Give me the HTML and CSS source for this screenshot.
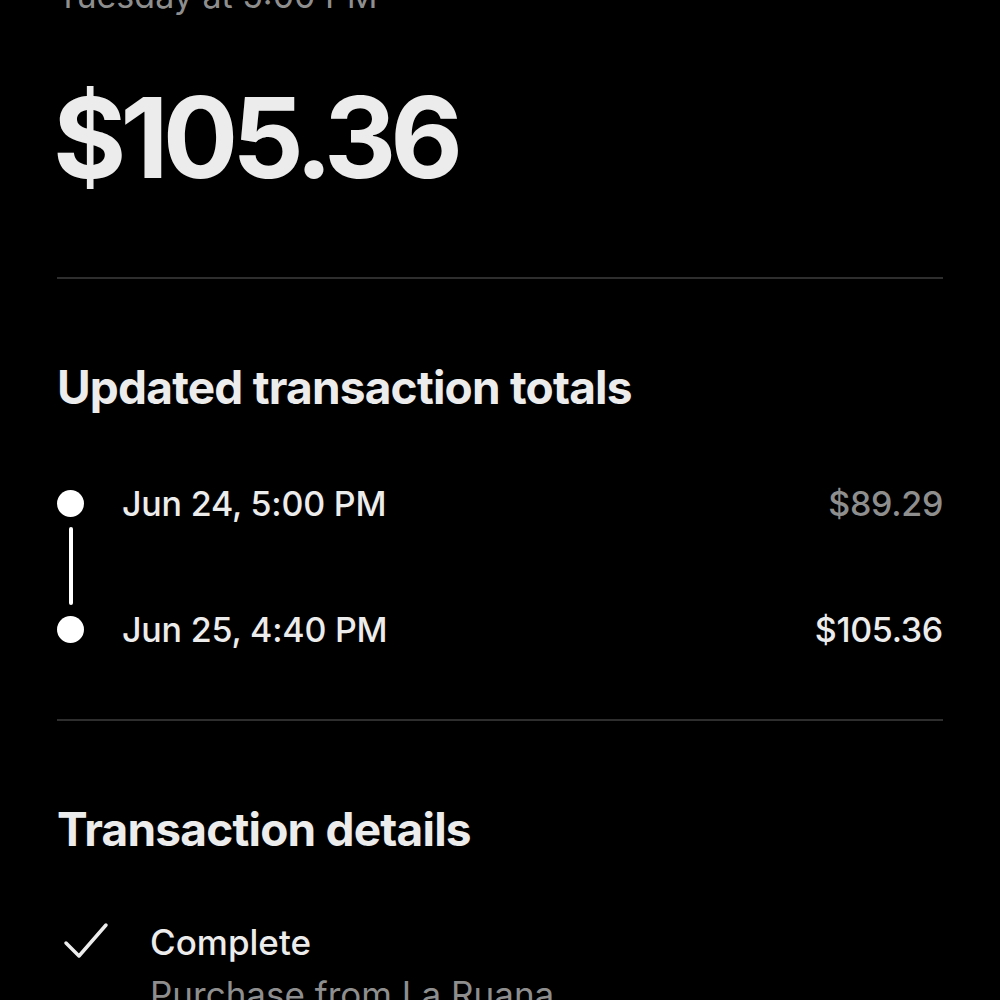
FILE: index.html
```html
<!DOCTYPE html>
<html lang="en">
<head>
    <meta charset="UTF-8">
    <meta name="viewport" content="width=device-width, initial-scale=1.0">
    <title>Transaction</title>
    <link rel="stylesheet" href="styles.css">
</head>
<body>
    <div class="page">
        <div class="date">Tuesday at 5:00 PM</div>
        <div class="amount">$105.36</div>

        <div class="divider"></div>

        <h2 class="section-title">Updated transaction totals</h2>

        <div class="timeline">
            <div class="tl-row">
                <span class="dot"></span>
                <span class="tl-date">Jun 24, 5:00 PM</span>
                <span class="tl-amount old">$89.29</span>
            </div>
            <div class="tl-line"></div>
            <div class="tl-row">
                <span class="dot"></span>
                <span class="tl-date">Jun 25, 4:40 PM</span>
                <span class="tl-amount">$105.36</span>
            </div>
        </div>

        <div class="divider"></div>

        <h2 class="section-title">Transaction details</h2>

        <div class="detail">
            <svg class="check" viewBox="0 0 46 38" width="46" height="38">
                <path d="M3 21 L16 34 L43 3" fill="none" stroke="#ececec" stroke-width="3.5" stroke-linecap="round" stroke-linejoin="round"/>
            </svg>
            <div class="detail-text">
                <div class="detail-title">Complete</div>
                <div class="detail-sub">Purchase from La Ruana</div>
            </div>
        </div>
    </div>
</body>
</html>
```

FILE: styles.css
```css
html, body {
    margin: 0;
    background: #000;
    height: 100%;
    overflow: hidden;
}
body {
    font-family: Inter, "Liberation Sans", sans-serif;
    color: #ececec;
}
.page {
    padding: 0 57px;
}
.date {
    font-size: 34px;
    line-height: 40px;
    color: #8e8e8e;
    margin-top: -24px;
}
.amount {
    font-size: 112px;
    font-weight: 700;
    letter-spacing: -6px;
    line-height: 120px;
    margin: 61px 0 0 -4px;
}
.divider {
    height: 2px;
    background: #2e2e2e;
}
.amount + .divider {
    margin-top: 80px;
}
.section-title {
    margin: 0;
    font-size: 46px;
    font-weight: 700;
    letter-spacing: -0.8px;
    line-height: 54px;
    padding-top: 81px;
}
.timeline {
    margin-top: 69px;
    margin-bottom: 70px;
}
.tl-row {
    display: flex;
    align-items: center;
    height: 40px;
}
.dot {
    width: 27px;
    height: 27px;
    border-radius: 50%;
    background: #fff;
    flex: none;
}
.tl-date {
    margin-left: 38px;
    font-size: 34px;
    font-weight: 500;
    letter-spacing: -0.2px;
}
.tl-amount {
    margin-left: auto;
    font-size: 34px;
    font-weight: 500;
    letter-spacing: -0.3px;
}
.tl-amount.old {
    color: #8e8e8e;
}
.tl-line {
    width: 4px;
    height: 78px;
    margin: 4px 0 4px 11.5px;
    border-radius: 2px;
    background: #fff;
}
.detail {
    display: flex;
    align-items: flex-start;
    margin-top: 66px;
}
.check {
    margin: 0 0 0 6px;
    flex: none;
}
.detail-text {
    margin-left: 41px;
}
.detail-title {
    font-size: 35px;
    font-weight: 500;
    line-height: 40px;
}
.detail-sub {
    font-size: 35px;
    color: #8e8e8e;
    line-height: 40px;
    margin-top: 12px;
}
```
